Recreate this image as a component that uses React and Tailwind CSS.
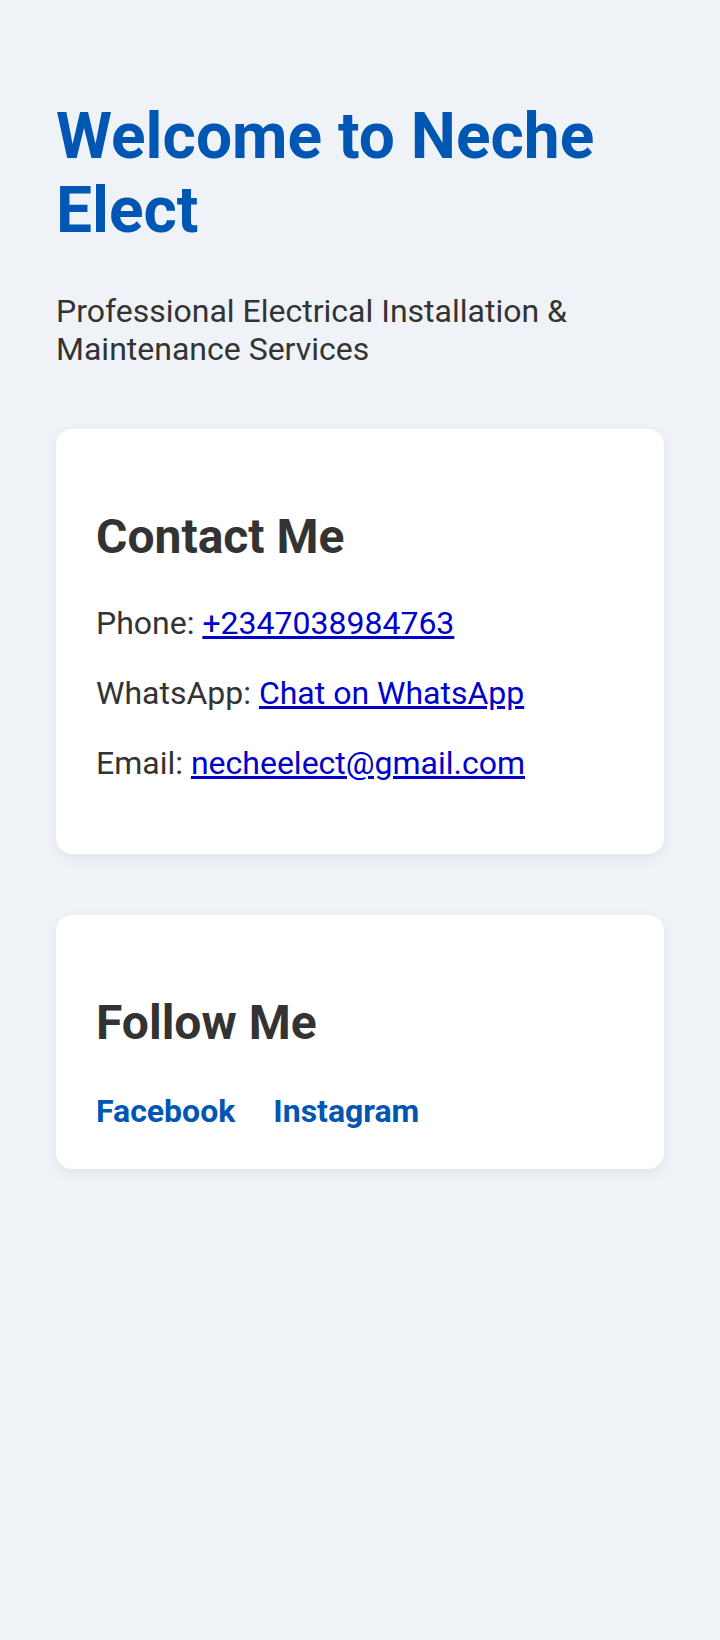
import React from 'react';

const font = { fontFamily: 'Roboto, "Noto Sans", sans-serif' };

function Card({ title, children, className = '' }) {
  return (
    <section className={`bg-white rounded-2xl p-10 shadow-[0_4px_14px_rgba(0,0,0,0.06)] ${className}`}>
      <h2 className="mt-[39px] text-[48px] leading-[58px] font-bold text-[#333]">{title}</h2>
      {children}
    </section>
  );
}

export default function App() {
  return (
    <div className="min-h-[1640px] bg-[#eff3f8] px-14 pt-[100px]" style={font}>
      <h1 className="text-[64px] leading-[74px] font-bold text-[#0056b3]">Welcome to Neche Elect</h1>
      <p className="mt-[44px] text-[32px] leading-[38px] text-[#333]">
        Professional Electrical Installation &amp; Maintenance Services
      </p>

      <Card title="Contact Me" className="mt-[61px]">
        <div className="mt-[38px] flex flex-col gap-[31px] pb-[31px] text-[32px] leading-[39px] text-[#333]">
          <p>
            Phone: <a href="tel:+2347038984763" className="text-[#0000cc] underline">+2347038984763</a>
          </p>
          <p>
            WhatsApp: <a href="#" className="text-[#0000cc] underline">Chat on WhatsApp</a>
          </p>
          <p>
            Email: <a href="mailto:necheelect@gmail.com" className="text-[#0000cc] underline">necheelect@gmail.com</a>
          </p>
        </div>
      </Card>

      <Card title="Follow Me" className="mt-[61px]">
        <div className="mt-[41px] flex gap-[38px] text-[32px] leading-[36px] font-bold text-[#0056b3]">
          <a href="#">Facebook</a>
          <a href="#">Instagram</a>
        </div>
      </Card>
    </div>
  );
}
